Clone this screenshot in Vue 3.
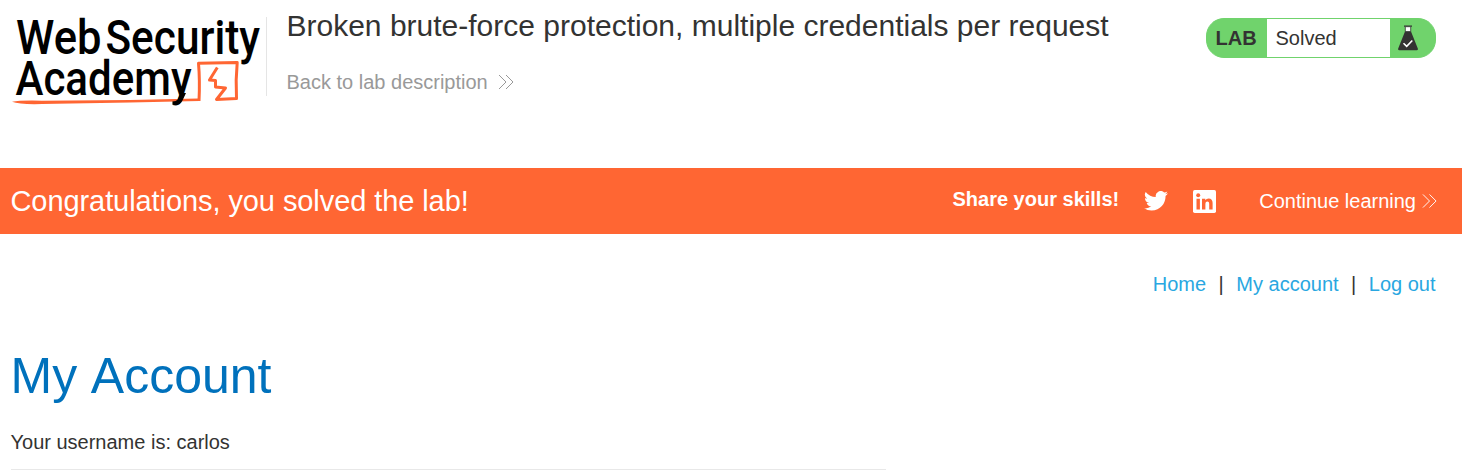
<script setup>
const links = ['Home', 'My account', 'Log out']
</script>

<template>
  <div class="page">
    <header class="top">
      <svg class="logo" viewBox="0 0 262 110" role="img" aria-label="Web Security Academy">
        <g class="ink">
          <text x="16" y="54" textLength="85.500" lengthAdjust="spacingAndGlyphs">Web</text>
          <text x="105.500" y="54" textLength="154.500" lengthAdjust="spacingAndGlyphs">Security</text>
          <text x="15.500" y="95" textLength="176" lengthAdjust="spacingAndGlyphs">Academy</text>
        </g>
        <path class="swoosh" d="M12 101.700Q20 100.200 42 100.700L130 99.900 198 98.400 199.500 101 130 102.500 42 104Q20 104.700 12 101.700Z" />
        <path class="mark" d="M199 101Q200 80 198.500 63.300L237.200 62.500Q235.500 80 236.500 98.500L216.500 99.500 225.500 88 215.500 87V80.500L209.500 80 217.300 67.500" />
        <path d="M172.500 101.300Q176.500 102 178.500 98L180.500 93 186 93 182.500 100.500Q180 105.500 172.500 104.700Z" />
      </svg>
      <div class="title">
        <h2>Broken brute-force protection, multiple credentials per request</h2>
        <a class="back"><span>Back to lab description</span>
          <svg class="chev" viewBox="0 0 16 16"><path d="M1 1 8 8 1 15M8 1 15 8 8 15" /></svg>
        </a>
      </div>
      <div class="badge">
        <b>LAB</b>
        <span class="status">Solved</span>
        <svg class="flask" viewBox="0 0 20 26">
          <path d="M6 .5h8v1.200H6z" fill="#333332" />
          <path d="M7.300 1.700h5.400v5H7.300z" fill="#fff" stroke="#333332" stroke-width=".8" />
          <path d="M7 6.500h6l6.800 17q.5 1.800-1.200 1.800H1.400q-1.700 0-1.200-1.800z" fill="#333332" />
          <path d="M5.500 18.200 8.700 21.300 14.300 15.500" fill="none" stroke="#fff" stroke-width="1.600" />
        </svg>
      </div>
    </header>

    <section class="banner">
      <p class="congrats">Congratulations, you solved the lab!</p>
      <b class="share">Share your skills!</b>
      <svg class="twitter" viewBox="0 0 24 20"><path d="M24 2.370a9.900 9.900 0 0 1-2.830.770A4.930 4.930 0 0 0 23.340.430a9.870 9.870 0 0 1-3.130 1.190A4.920 4.920 0 0 0 11.820 6.100 13.980 13.980 0 0 1 1.670.960a4.920 4.920 0 0 0 1.530 6.570 4.900 4.900 0 0 1-2.230-.610v.060a4.930 4.930 0 0 0 3.950 4.830 4.930 4.930 0 0 1-2.220.080 4.930 4.930 0 0 0 4.600 3.420A9.880 9.880 0 0 1 0 17.350 13.940 13.940 0 0 0 7.550 19.560c9.140 0 14.310-7.710 13.980-14.620A10 10 0 0 0 24 2.370z" /></svg>
      <svg class="linkedin" viewBox="0 0 23 23">
        <rect width="23" height="23" rx="1.700" fill="#fff" />
        <g fill="#ff6633"><circle cx="5.200" cy="5.300" r="2" /><path d="M3.500 8.700h3.400v10.800H3.500zM9 8.700h3.300v1.500q1.100-1.800 3.300-1.800 4 0 4 4.700v6.400h-3.400v-5.800q0-2.300-1.800-2.300-2 0-2 2.300v5.800H9z" /></g>
      </svg>
      <a class="continue">Continue learning</a>
      <svg class="chev light" viewBox="0 0 16 16"><path d="M1 1 8 8 1 15M8 1 15 8 8 15" /></svg>
    </section>

    <nav class="nav">
      <template v-for="(link, i) in links" :key="link">
        <span v-if="i" class="sep">|</span>
        <a>{{ link }}</a>
      </template>
    </nav>

    <main class="content">
      <h1>My Account</h1>
      <p>Your username is: carlos</p>
      <div class="rule"></div>
    </main>
  </div>
</template>

<style>
body { margin: 0; background: #fff; overflow: hidden; }
</style>

<style scoped>
.page { height: 470px; overflow: hidden; font: 20px/24px "Liberation Sans", Arial, sans-serif; color: #333332; }
h1, h2, p { margin: 0; font-weight: 400; }
.top { display: flex; height: 168px; padding-right: 26px; align-items: flex-start; }
.logo { width: 262px; height: 110px; flex: none; overflow: visible; }
.ink { fill: #000; font: 500 47.800px Roboto, sans-serif; }
.swoosh { fill: #ff6633; }
.mark { fill: none; stroke: #ff6633; stroke-width: 3; stroke-linejoin: round; }
.title { margin: 17px 0 0 4px; padding-left: 19.500px; height: 79px; border-left: 1px solid #e5e5e5; flex: 1; }
.title h2 { font-size: 30px; line-height: 34px; margin-top: -8px; white-space: nowrap; }
.back { display: flex; align-items: center; gap: 10px; margin-top: 27px; color: #999; }
.chev { width: 16px; height: 16px; fill: none; stroke: #999; stroke-width: 1; flex: none; }
.light { width: 15px; stroke: #fff; margin-left: 6px; }
.badge { box-sizing: border-box; display: flex; align-items: center; width: 230px; height: 40px; margin-top: 18px; border: 1px solid #70d36c; border-radius: 18px; background: #70d36c; overflow: hidden; }
.badge b { width: 60px; padding-left: 8.500px; box-sizing: border-box; }
.status { width: 123px; height: 38px; line-height: 38px; padding-left: 8.500px; box-sizing: border-box; background: #fff; }
.flask { width: 20px; height: 26px; margin-left: 8px; }
.banner { display: flex; align-items: center; height: 66px; padding: 0 25px 0 10.500px; background: #ff6633; color: #fff; box-sizing: border-box; }
.congrats { flex: 1; font-size: 29px; line-height: 34px; letter-spacing: -.08px; }
.share { margin-top: -4px; }
.twitter { width: 24px; height: 20px; margin-left: 25px; fill: #fff; }
.linkedin { width: 23px; height: 23px; margin-left: 25px; }
.continue { margin-left: 43px; }
.nav { display: flex; justify-content: flex-end; padding: 38px 26.500px 0 0; }
.nav a { color: #29a7e1; }
.sep { margin: 0 12.500px; }
.content { padding: 0 10.500px; }
h1 { color: #0071bc; font-size: 50px; line-height: 56px; margin-top: 52px; word-spacing: 2.500px; }
.content p { margin-top: 26px; }
.rule { width: 875px; height: 1px; margin-top: 15px; background: #e8e8e8; }
</style>
